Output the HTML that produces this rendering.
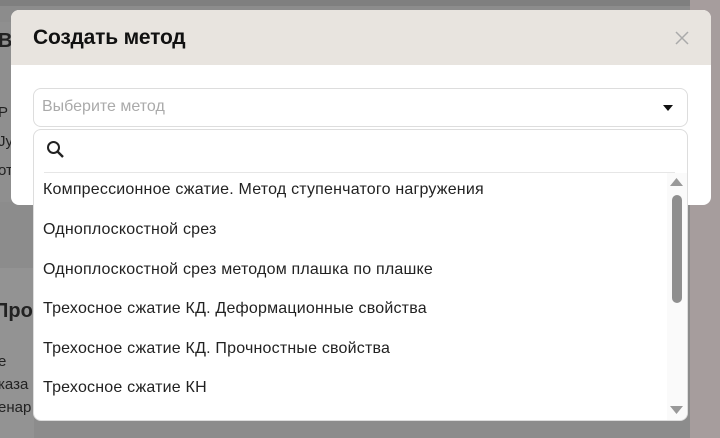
<!DOCTYPE html>
<html><head><meta charset="utf-8"><style>
*{box-sizing:border-box;margin:0;padding:0}
body{width:720px;height:438px;overflow:hidden;position:relative;background:#8c8c8c;font-family:"Liberation Sans",sans-serif}
.bg{position:absolute}
.modal{position:absolute;left:11px;top:10px;width:700px;height:195px;background:#fff;border-radius:8px;overflow:hidden}
.hdr{height:55px;background:#e8e4df;padding:0 22px;display:flex;align-items:center;justify-content:space-between}
.hdr h1{font-size:21px;font-weight:bold;color:#111;letter-spacing:-0.2px}
.sel{position:absolute;left:33px;top:88px;width:655px;height:39px;border:1px solid #ddd;border-radius:8px;background:#fff;font-size:16px;color:#aaa;padding:9px 8px}
.dd{position:absolute;left:33px;top:129px;width:655px;height:292px;border:1px solid #ddd;border-radius:8px;background:#fff;overflow:hidden}
.search{height:43px;border-bottom:1px solid #e6e6e6;margin:0 12px 0 10px;position:relative}
.item{position:absolute;left:9px;font-size:16px;letter-spacing:0.2px;color:#222}
.track{position:absolute;right:0;top:43px;width:20px;bottom:0;background:#fafafa}
</style></head><body>
<div class="bg" style="left:0;top:0;width:720px;height:6px;background:#7f7f7f"></div>
<div class="bg" style="left:0;top:22px;width:11px;height:180px;background:#8f8f8f"></div>
<div class="bg" style="left:0;top:268px;width:34px;height:170px;background:#939393"></div>
<div class="bg" style="left:690px;top:0;width:30px;height:438px;background:#a69d9d"></div>
<div style="position:absolute;left:-2px;top:30px;font-size:20px;font-weight:bold;color:#222">Вы</div>
<div style="position:absolute;left:-6px;top:300px;font-size:20px;font-weight:bold;color:#222">Про</div>
<div style="position:absolute;left:-2px;top:98px;font-size:15px;color:#222;line-height:29px">P<br>Jy<br>от</div>
<div style="position:absolute;left:-2px;top:350px;font-size:15px;color:#222;line-height:23px">е<br>каза<br>енар</div>
<div class="modal"><div class="hdr"><h1>Создать метод</h1>
<svg width="14" height="14" viewBox="0 0 14 14"><path d="M1 1L13 13M13 1L1 13" stroke="#aaa" stroke-width="1.5"/></svg></div></div>
<div class="sel">Выберите метод
<svg style="position:absolute;right:14px;top:16px" width="10" height="6"><path d="M0 0H10L5 6Z" fill="#111"/></svg></div>
<div class="dd">
<div class="search"><svg style="position:absolute;left:2px;top:10px" width="20" height="20" viewBox="0 0 20 20"><circle cx="7.5" cy="7.5" r="5.5" stroke="#222" stroke-width="2" fill="none"/><path d="M11.5 11.5L17 17" stroke="#222" stroke-width="2.4"/></svg></div>
<div class="item" style="top:51px">Компрессионное сжатие. Метод ступенчатого нагружения</div>
<div class="item" style="top:91px">Одноплоскостной срез</div>
<div class="item" style="top:131px">Одноплоскостной срез методом плашка по плашке</div>
<div class="item" style="top:170px">Трехосное сжатие КД. Деформационные свойства</div>
<div class="item" style="top:210px">Трехосное сжатие КД. Прочностные свойства</div>
<div class="item" style="top:249px">Трехосное сжатие КН</div>
<div class="track">
<svg style="position:absolute;left:3px;top:5px" width="13" height="8"><path d="M0 8L6.5 0L13 8Z" fill="#999"/></svg>
<div style="position:absolute;left:5px;top:22px;width:10px;height:108px;border-radius:5px;background:#8f8f8f"></div>
<svg style="position:absolute;left:3px;bottom:6px" width="13" height="8"><path d="M0 0L6.5 8L13 0Z" fill="#999"/></svg>
</div>
</div>
</body></html>
